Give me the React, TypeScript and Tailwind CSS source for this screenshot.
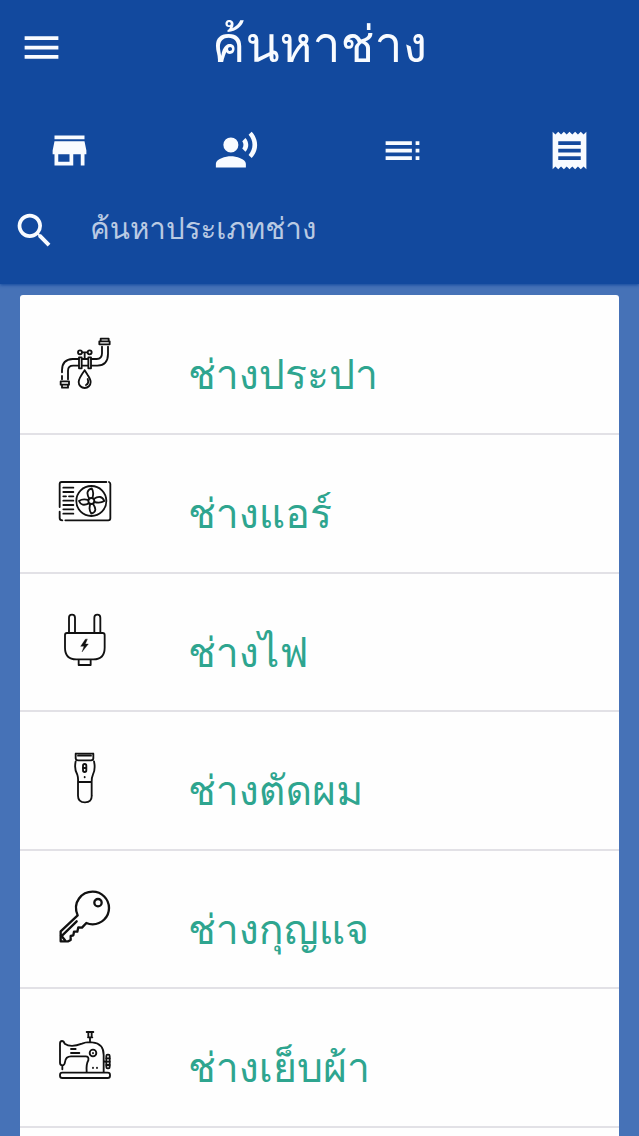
import type { ReactNode } from "react";

function MaterialIcon({ d, label }: { d: string; label: string }) {
  return (
    <svg viewBox="0 0 24 24" className="block size-[45px] shrink-0 fill-[#f8fbff]" aria-label={label}>
      <path d={d} />
    </svg>
  );
}

const tabs = [
  { label: "store", d: "M20 4H4v2h16V4zm1 10v-2l-1-5H4l-1 5v2h1v6h10v-6h4v6h2v-6h1zm-9 4H6v-4h6v4z" },
  {
    label: "voice",
    d: "M9 5a4 4 0 1 1 0 8a4 4 0 0 1 0-8zM9 15c-2.67 0-8 1.34-8 4v2h16v-2c0-2.66-5.33-4-8-4zm7.76-9.64l-1.68 1.69c.84 1.18.84 2.71 0 3.89l1.68 1.69c2.02-2.02 2.02-5.07 0-7.27zM20.07 2l-1.63 1.63c2.77 3.02 2.77 7.56 0 10.74L20.07 16c3.9-3.89 3.91-9.95 0-14z",
  },
  {
    label: "contents",
    d: "M3 9h14V7H3v2zm0 4h14v-2H3v2zm0 4h14v-2H3v2zm16 0h2v-2h-2v2zm0-10v2h2V7h-2zm0 6h2v-2h-2v2z",
  },
  {
    label: "receipt",
    d: "M18 17H6v-2h12v2zm0-4H6v-2h12v2zm0-4H6V7h12v2zM3 22l1.5-1.5L6 22l1.5-1.5L9 22l1.5-1.5L12 22l1.5-1.5L15 22l1.5-1.5L18 22l1.5-1.5L21 22V2l-1.5 1.5L18 2l-1.5 1.5L15 2l-1.5 1.5L12 2l-1.5 1.5L9 2 7.5 3.5 6 2 4.5 3.5 3 2v20z",
  },
];

function LineIcon({ viewBox, children }: { viewBox: string; children: ReactNode }) {
  return (
    <svg
      viewBox={viewBox}
      className="block size-[54px] shrink-0 overflow-visible fill-none stroke-[#111] stroke-[5.5]"
      strokeLinecap="round"
      strokeLinejoin="round"
    >
      {children}
    </svg>
  );
}

const services = [
  {
    name: "ช่างประปา",
    icon: (
      <LineIcon viewBox="55 51 162 162">
        <path d="M183 56h24v8h-24zM179 64h31v9h-31zM63 184h25v10H63zM67 194h18v9H67z" />
        <path d="M187 80v20q0 17-16 17h-16M205 80v22q0 34-32 35h-18M67 157v-6q0-33 32-34h18M85 178v-26q0-15 16-15h16M67 168v10" />
        <path d="M118 112h8v33h-8zM146 112h8v33h-8zM126 117h20M126 137h20M135 101v15M127 97h16" />
        <circle cx="121" cy="97" r="6" />
        <circle cx="150" cy="97" r="6" />
        <path d="M135 151q-18 25-18 35a18 18 0 0 0 36 0q0-8-9-21L135 151M144 177q5 13-5 18" />
      </LineIcon>
    ),
  },
  {
    name: "ช่างแอร์",
    icon: (
      <LineIcon viewBox="54 48 162 162">
        <path d="M59 141V72q0-6 6-6h134M207 66q4 2 4 6v103q0 6-6 6H76M67 181q-8 0-8-7v-19" />
        <path d="M70 83h30M70 96h30M70 109h8M87 109h13M70 122h30M70 135h30M70 148h30M70 161h30" />
        <circle cx="154" cy="123" r="45" />
        <circle cx="154" cy="123" r="9" />
        <path d="M148 116q-14-24 7-31q8 12 2 29M161 117q23-15 32 6q-12 8-30 3M159 131q16 24-5 30q-9-12-3-29M147 130q-23 11-30-7q11-8 28-3" />
      </LineIcon>
    ),
  },
  {
    name: "ช่างไฟ",
    icon: (
      <LineIcon viewBox="54 45 162 162">
        <path d="M87 97V53q0-9 9-9t9 9v44M163 97V53q0-9 9-9t9 9v44M81 99h107q6 0 6 6v38q0 35-34 35h-51q-34 0-34-35v-38q0-6 6-6zM116 180v15h36v-15" />
        <path className="fill-[#111] stroke-1" d="M136 118l-14 21h10l-6 17l19-24h-9l6-14z" />
      </LineIcon>
    ),
  },
  {
    name: "ช่างตัดผม",
    icon: (
      <LineIcon viewBox="54 54 162 162">
        <path d="M107 56v14q1 6 8 6h38q7 0 7-6V56M108 56h51M114 62h39M107 79q-5 24 5 40q3 9 2 21v42q0 20 21 20t20-20v-42q0-13 4-22q8-16 3-39M115 141h39" />
        <rect x="129" y="87" width="10" height="24" rx="5" />
        <path d="M130 99h8M134 126v1" />
      </LineIcon>
    ),
  },
  {
    name: "ช่างกุญแจ",
    icon: (
      <LineIcon viewBox="54 51 162 162">
        <g className="stroke-[7]">
          <path d="M113 121C96 81 126 50 158 50a49 49 0 0 1 0 98q-10 0-19-4l-13 14l-11-1l-3 13h-10l-2 11l-8 2v12l-7 4H62v-30z" />
          <circle cx="174" cy="83" r="11" />
          <path d="M67 181l43-42M63 181l12 15" />
        </g>
      </LineIcon>
    ),
  },
  {
    name: "ช่างเย็บผ้า",
    icon: (
      <LineIcon viewBox="54 45 162 162">
        <rect x="60" y="173" width="150" height="16" rx="7" />
        <path d="M67 163v-12q-7-1-7-8V86q0-8 6-8q5 0 8 8q18 13 52 0q14-6 31-4q34 3 34 38v51M67 151q7 0 8-10q2-17 18-17h44q10 0 8 12q-7 12-5 35M93 102h14M93 114h25M140 51h20M144 67h13M145 51v16M155 51v16M150 67v15M194 140h5" />
        <circle cx="159" cy="114" r="10" />
        <rect x="199" y="119" width="10" height="41" rx="4" />
        <path d="M199 130h10M199 140h10M199 150h10M159 114v1M159 158v1M171 158v1" />
      </LineIcon>
    ),
  },
];

export default function App() {
  return (
    <div className="flex h-[1136px] w-full flex-col overflow-hidden bg-[#4672b7] font-['Loma','Liberation_Sans',sans-serif]">
      <header className="h-[284px] shrink-0 bg-[#12499e] shadow-[0_1px_3px_#12499e]">
        <div className="grid h-[95px] grid-cols-[80px_1fr_80px] items-center">
          <div className="pl-[19px]">
            <MaterialIcon label="menu" d="M3 18h18v-2H3v2zm0-5h18v-2H3v2zm0-7v2h18V6H3z" />
          </div>
          <h1 className="pb-[6px] text-center text-[50px] leading-[89px] whitespace-nowrap text-[#f8fbff]">ค้นหาช่าง</h1>
        </div>
        <nav className="flex h-[111px] items-center justify-between px-[47px]">
          {tabs.map((tab) => (
            <MaterialIcon key={tab.label} label={tab.label} d={tab.d} />
          ))}
        </nav>
        <div className="mt-px flex h-[46px] items-center pl-[12px]">
          <MaterialIcon
            label="search"
            d="M15.5 14h-.79l-.28-.27A6.471 6.471 0 0 0 16 9.5 6.5 6.5 0 1 0 9.5 16c1.61 0 3.09-.59 4.23-1.57l.27.28v.79l5 4.99L20.49 19l-4.99-5zm-6 0C7.01 14 5 11.99 5 9.5S7.01 5 9.5 5 14 7.01 14 9.5 11.99 14 9.5 14z"
          />
          <span className="ml-[33px] pb-[2px] text-[29.5px] leading-[44px] whitespace-nowrap text-[#b9cae3]">ค้นหาประเภทช่าง</span>
        </div>
      </header>
      <main className="mx-5 mt-[11px] flex-1 overflow-hidden rounded-t-[3px] bg-[#fefefe]">
        {services.map((service) => (
          <div
            key={service.name}
            className="flex h-[138.6px] items-start border-b-2 border-[#e2e1e6] pt-[41px] pl-[38px] first:h-[140px] first:pt-[42px]"
          >
            {service.icon}
            <span className="ml-[76px] text-[41px] leading-[75px] whitespace-nowrap text-[#2ea58f]">{service.name}</span>
          </div>
        ))}
      </main>
    </div>
  );
}
